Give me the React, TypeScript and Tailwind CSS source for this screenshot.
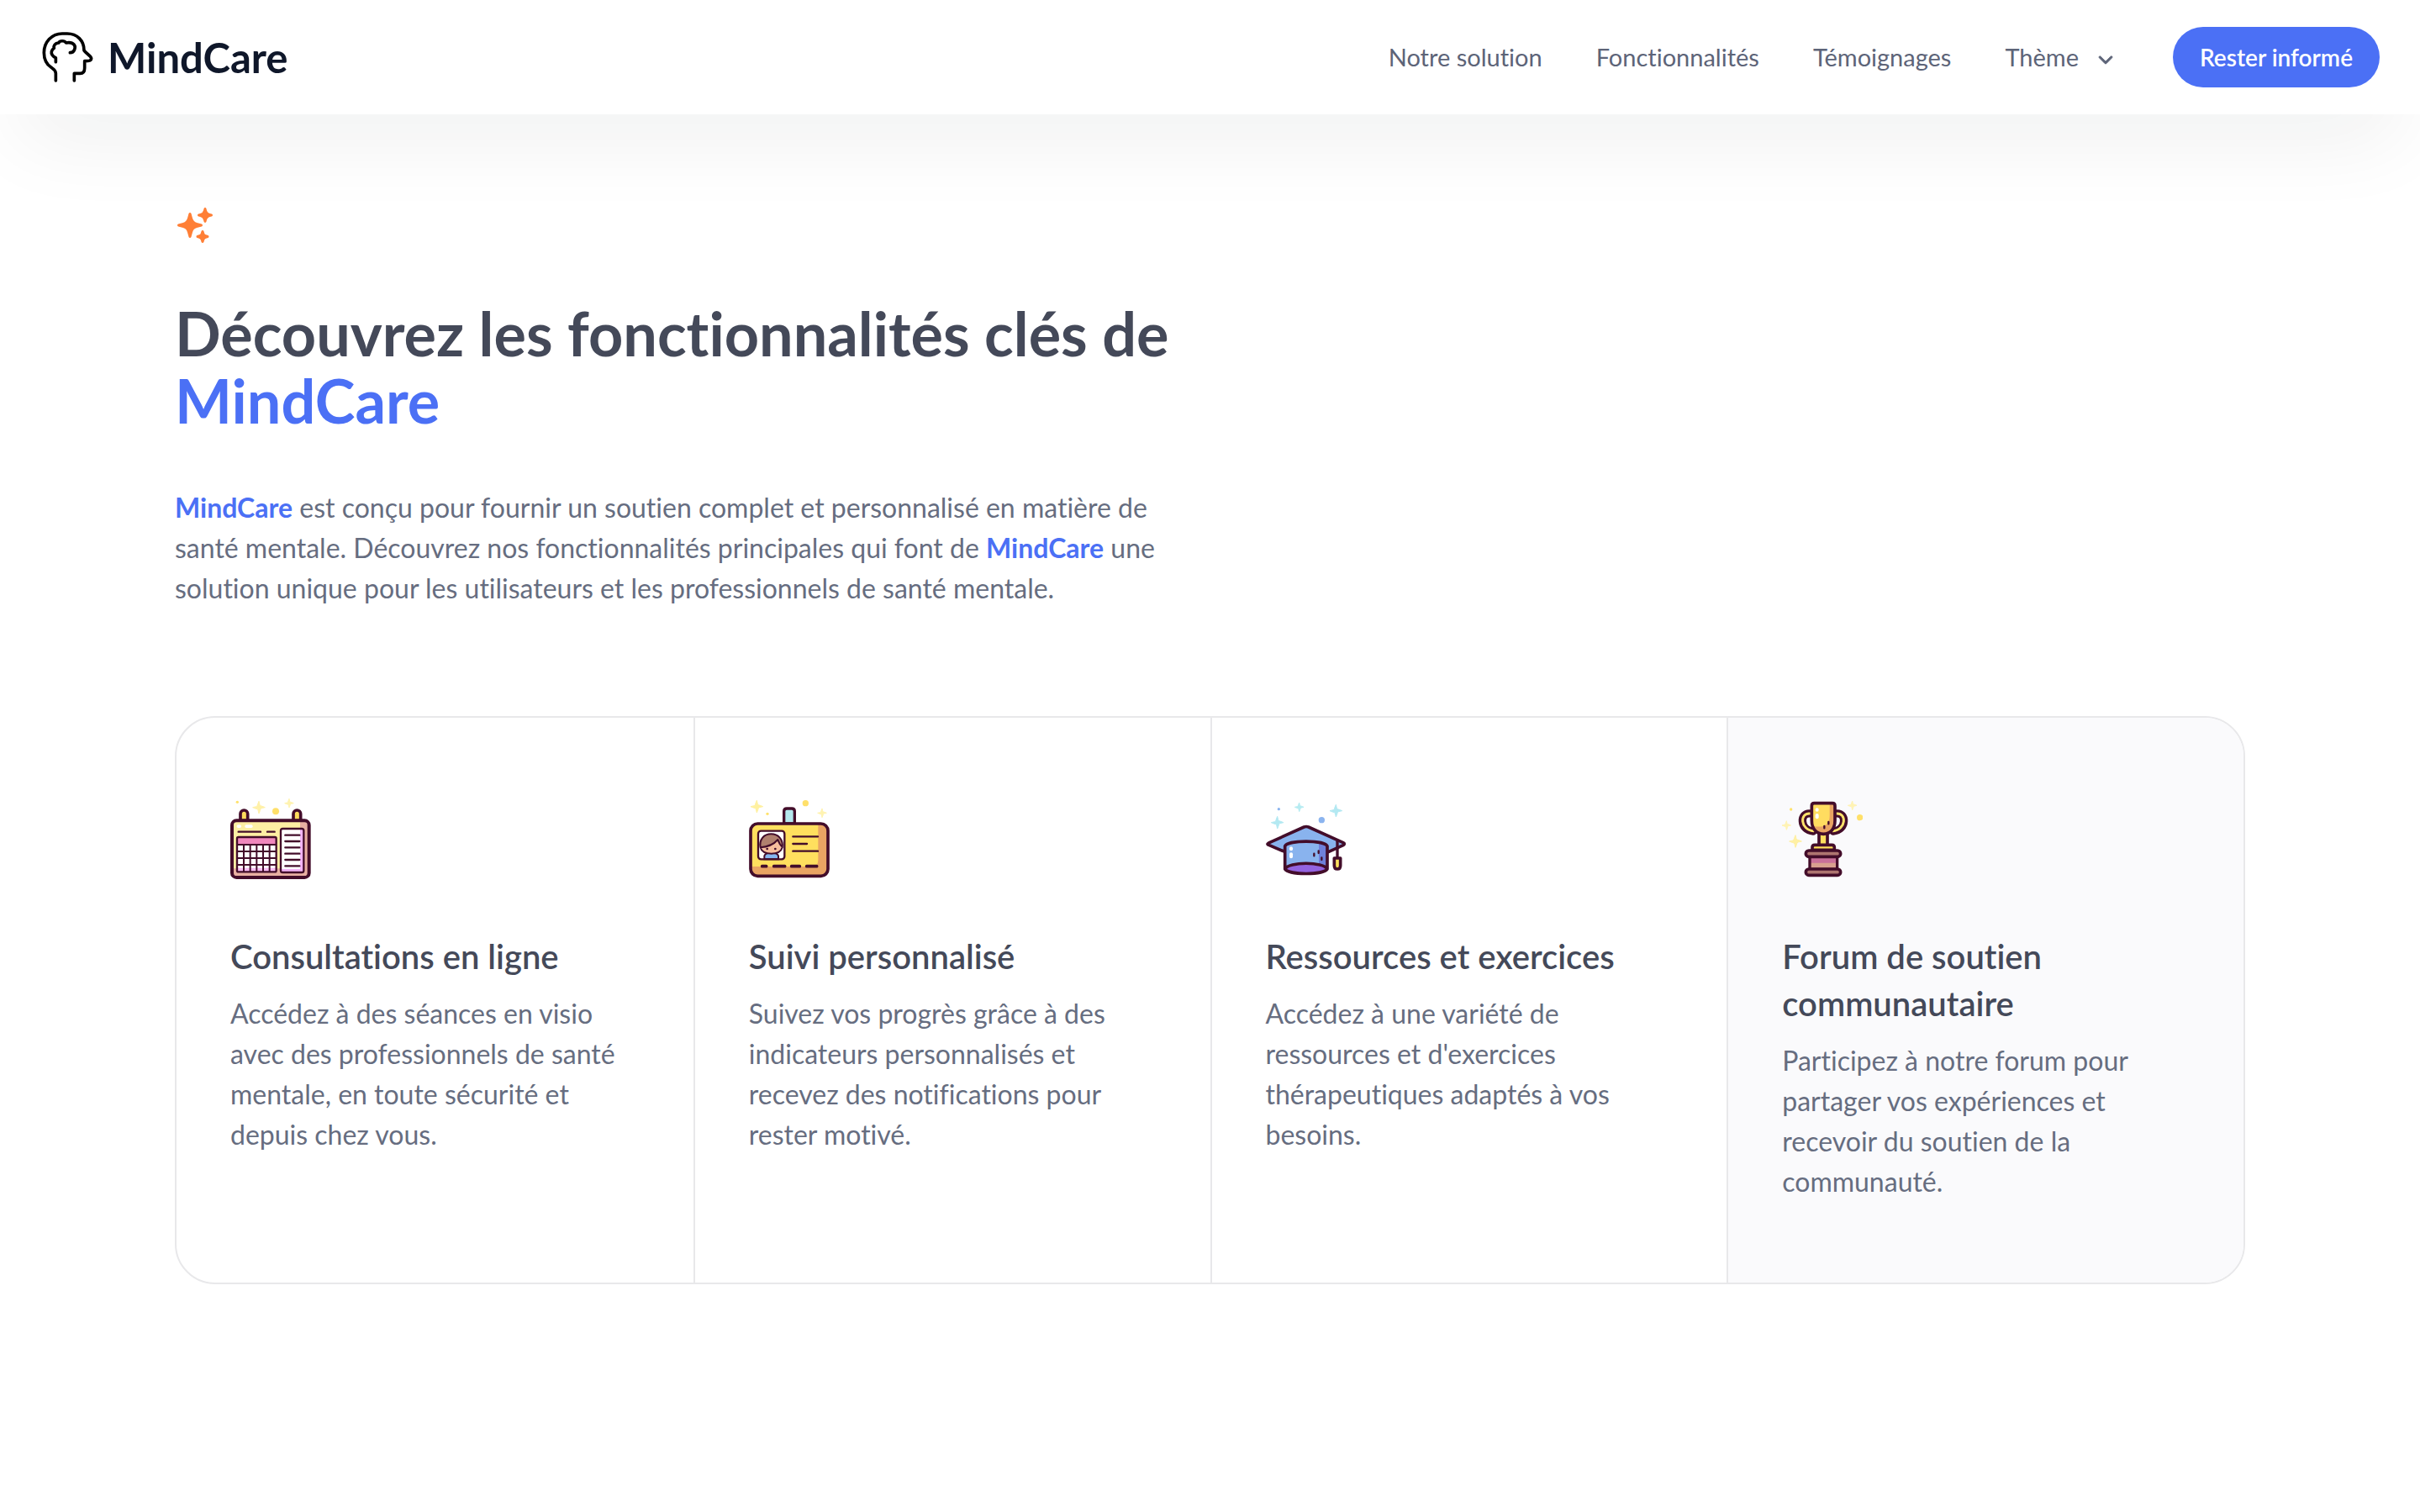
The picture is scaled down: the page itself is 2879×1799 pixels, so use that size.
import type { ReactNode } from "react";
import { HiSparkles } from "react-icons/hi2";

const INK = "#430d2a";

function Star({ x, y, r, fill }: { x: number; y: number; r: number; fill: string }) {
  const k = r * 0.26;
  return (
    <path
      fill={fill}
      stroke={fill}
      strokeWidth={3}
      strokeLinejoin="round"
      d={`M${x} ${y - r}Q${x + k / 2} ${y - k} ${x + k} ${y - k}T${x + r} ${y}Q${x + k} ${y + k / 2} ${x + k} ${y + k}T${x} ${y + r}Q${x - k / 2} ${y + k} ${x - k} ${y + k}T${x - r} ${y}Q${x - k} ${y - k / 2} ${x - k} ${y - k}T${x} ${y - r}Z`}
    />
  );
}

function LogoMark() {
  return (
    <svg
      viewBox="144 108 192 192"
      className="size-16"
      fill="none"
      stroke="#000"
      strokeWidth={11}
      strokeLinecap="round"
      strokeLinejoin="round"
      aria-hidden="true"
    >
      <path d="M199 288V262C199 250 192 247 183 241C167 230 157 212 157 188C157 150 185 120 222 120H240C275 120 300 145 300 180C306 190 326 200 326 209C326 216 318 218 302 218V243C302 256 296 262 286 262H265V288" />
      <path d="M199 221V206C188 202 182 192 184 184C186 178 190 174 193 172C190 163 197 154 209 153C214 144 230 144 236 153C248 151 258 152 264 159C272 168 266 188 250 188" />
    </svg>
  );
}

function CalendarIcon() {
  return (
    <svg viewBox="42 30 288 288" className="size-24" aria-hidden="true">
      <circle cx={67} cy={43} r={5} fill="#ffe26b" />
      <circle cx={204} cy={76} r={12} fill="#ffe06a" />
      <Star x={144} y={62} r={22} fill="#fff1a8" />
      <Star x={252} y={47} r={16} fill="#fff3b0" />
      <path d="M78 110V85a12 12 0 0 1 26 0v25zM267 110V85a12 12 0 0 1 26 0v25z" fill="#ffdb5c" stroke={INK} strokeWidth={11} />
      <rect x={48} y={109} width={275} height={203} rx={16} fill="#fdeea3" />
      <path d="M291 109h16a16 16 0 0 1 16 16v171a16 16 0 0 1-16 16H64a16 16 0 0 1-16-16v-16h243z" fill="#e9b0a2" />
      <rect x={48} y={109} width={275} height={203} rx={16} fill="none" stroke={INK} strokeWidth={12} />
      <rect x={65} y={124} width={16} height={11} rx={5} fill="#fff" />
      <rect x={94} y={124} width={28} height={11} rx={5} fill="#fff" />
      <path d="M71 149h79M174 149h26" stroke={INK} strokeWidth={7} strokeLinecap="round" />
      <rect x={66} y={168} width={140} height={124} rx={5} fill="#fff" />
      <path d="M66 278h140v14H66z" fill="#f9bdf5" />
      <path d="M66 168h140v25H66z" fill="#f088bd" />
      <path
        d="M68 195h136M68 219h136M68 243h136M68 267h136M90 195v96M113 195v96M136 195v96M159 195v96M182 195v96"
        stroke={INK}
        strokeWidth={6}
      />
      <rect x={66} y={168} width={140} height={124} rx={5} fill="none" stroke={INK} strokeWidth={7} />
      <rect x={222} y={138} width={82} height={156} rx={7} fill="#fff" />
      <path d="M291 138h13v156h-82v-12h69z" fill="#f3b5f7" />
      <rect x={222} y={138} width={82} height={156} rx={7} fill="none" stroke={INK} strokeWidth={7} />
      <path
        d="M238 161h51M238 183h51M238 205h51M238 227h51M238 249h51M238 271h51"
        stroke={INK}
        strokeWidth={7}
        strokeLinecap="round"
      />
    </svg>
  );
}

function BadgeIcon() {
  return (
    <svg viewBox="33 30 288 288" className="size-24" aria-hidden="true">
      <Star x={61} y={59} r={22} fill="#fff1a0" />
      <Star x={294} y={82} r={16} fill="#fff3b0" />
      <circle cx={235} cy={47} r={11} fill="#ffe06a" />
      <circle cx={99} cy={85} r={5} fill="#ffe26b" />
      <path d="M158 120V76q0-10 10-10h18q10 0 10 10v44z" fill="#b5e8ee" stroke={INK} strokeWidth={10} />
      <rect x={39} y={120} width={276} height={187} rx={25} fill="#ffdf5e" />
      <path d="M280 120h10a25 25 0 0 1 25 25v137a25 25 0 0 1-25 25H64a25 25 0 0 1-25-25v-9h218q23 0 23-23z" fill="#e9a463" />
      <rect x={39} y={120} width={276} height={187} rx={25} fill="none" stroke={INK} strokeWidth={11} />
      <rect x={66} y={146} width={94} height={101} rx={10} fill="#fff" />
      <path d="M88 247v-12q4-10 16-10h18q12 0 16 10v12z" fill="#86b5ef" stroke={INK} strokeWidth={6} />
      <path d="M76 192a37 36 0 0 1 74 0c0 22-15 35-37 35s-37-13-37-35z" fill="#f7bd9d" />
      <path d="M71 205c-4-30 14-48 40-48s46 17 43 50q-12-12-18-29-22 25-65 27z" fill="#b0806e" />
      <path
        d="M74 205c-5-30 13-48 38-48s44 18 40 48c-4 15-18 22-39 22s-35-7-39-22zM73 205q42-3 63-28 6 18 17 27"
        fill="none"
        stroke={INK}
        strokeWidth={6}
        strokeLinejoin="round"
      />
      <circle cx={98} cy={210} r={4} fill={INK} />
      <circle cx={127} cy={210} r={4} fill={INK} />
      <rect x={66} y={146} width={94} height={101} rx={10} fill="none" stroke={INK} strokeWidth={7} />
      <path d="M190 166h89M190 192h50M190 218h89" stroke={INK} strokeWidth={7} strokeLinecap="round" />
      <path d="M80 272h15M122 272h39M185 272h29M239 272h36" stroke={INK} strokeWidth={11} strokeLinecap="round" />
    </svg>
  );
}

function GraduationIcon() {
  return (
    <svg viewBox="33 30 288 288" className="size-24" strokeLinejoin="round" aria-hidden="true">
      <circle cx={79} cy={68} r={5} fill="#8bb4ef" />
      <circle cx={232} cy={107} r={11} fill="#8bb4ef" />
      <Star x={152} y={61} r={16} fill="#b6ecf2" />
      <Star x={74} y={116} r={22} fill="#b3e9f2" />
      <Star x={283} y={74} r={22} fill="#b3e9f2" />
      <path d="M39 193q2-3 6-5l124-56q8-3 16 0l124 56q8 4 0 9l-53 24H102l-57-24q-5-2-6-4z" fill="#89b3ee" stroke={INK} strokeWidth={11} />
      <path d="M101 200c14-20 137-20 151 0v82c-14 22-137 22-151 0z" fill="#89b3ee" />
      <path d="M222 187q24 4 30 13v82l-30-18z" fill="#6f80da" />
      <path d="M101 282c12-26 139-26 151 0-12 22-139 22-151 0z" fill="#9363e0" />
      <path d="M114 273q62-18 124 0" fill="none" stroke="#ae83ea" strokeWidth={5} />
      <path d="M101 200c14-22 137-22 151 0v82c-14 22-137 22-151 0zM101 282c12-27 139-27 151 0" fill="none" stroke={INK} strokeWidth={11} />
      <rect x={117} y={202} width={12} height={15} rx={6} fill="#fff" />
      <rect x={117} y={223} width={12} height={21} rx={6} fill="#fff" />
      <path d="M205 227v8M221 217v8M232 241v8" stroke={INK} strokeWidth={7} strokeLinecap="round" />
      <path d="M288 184v58" stroke={INK} strokeWidth={10} strokeLinecap="round" />
      <path d="M277 243h22v26q0 13-11 13t-11-13z" fill="#ffe05c" stroke={INK} strokeWidth={11} />
    </svg>
  );
}

function TrophyIcon() {
  return (
    <svg viewBox="33 30 288 288" className="size-24" strokeLinejoin="round" aria-hidden="true">
      <Star x={284} y={55} r={16} fill="#fff3b4" />
      <Star x={49} y={126} r={16} fill="#fff3b4" />
      <Star x={81} y={183} r={22} fill="#fff0a4" />
      <circle cx={65} cy={69} r={5} fill="#ffe26b" />
      <circle cx={311} cy={98} r={11} fill="#ffe06a" />
      <g fill="none" strokeLinecap="round">
        <path d="M136 84c-42-7-40 61 8 63M224 84c42-7 40 61-8 63" stroke={INK} strokeWidth={28} />
        <path d="M134 84c-39-5-37 59 12 62M226 84c39-5 37 59-12 62" stroke="#ffe36b" strokeWidth={9} />
      </g>
      <path d="M165 152h30v46h-30z" fill="#ffdf5e" stroke={INK} strokeWidth={11} />
      <path d="M141 214v-9q0-9 9-9h61q9 0 9 9v9z" fill="#ffe05c" stroke={INK} strokeWidth={11} />
      <path d="M139 56q0-9 9-9h65q9 0 9 9v53c0 32-18 48-41 48s-42-16-42-48z" fill="#ffdc60" />
      <path d="M203 47h10q9 0 9 9v53c0 32-18 48-41 48-20 0-35-11-40-29 36 8 62 0 62-36z" fill="#e9a463" />
      <path d="M139 56q0-9 9-9h65q9 0 9 9v53c0 32-18 48-41 48s-42-16-42-48z" fill="none" stroke={INK} strokeWidth={11} />
      <rect x={152} y={64} width={12} height={13} rx={6} fill="#fff" />
      <rect x={152} y={84} width={12} height={19} rx={6} fill="#fff" />
      <path d="M184 129v7M199 114v7" stroke={INK} strokeWidth={7} strokeLinecap="round" />
      <path d="M132 238h98v45h-98z" fill="#d9a08f" />
      <path d="M132 238h98v22h-98z" fill="#c9709a" />
      <path d="M132 238h98v45h-98z" fill="none" stroke={INK} strokeWidth={10} />
      <rect x={118} y={216} width={124} height={22} rx={11} fill="#ae7570" stroke={INK} strokeWidth={11} />
      <rect x={118} y={282} width={124} height={22} rx={11} fill="#ae7570" stroke={INK} strokeWidth={11} />
    </svg>
  );
}

function Brand() {
  return <span className="font-bold text-[#4b70f5]">MindCare</span>;
}

const links = [
  { label: "Notre solution", href: "#solution" },
  { label: "Fonctionnalités", href: "#fonctionnalites" },
  { label: "Témoignages", href: "#temoignages" },
];

const features: { title: string; text: string; icon: ReactNode }[] = [
  {
    title: "Consultations en ligne",
    text: "Accédez à des séances en visio avec des professionnels de santé mentale, en toute sécurité et depuis chez vous.",
    icon: <CalendarIcon />,
  },
  {
    title: "Suivi personnalisé",
    text: "Suivez vos progrès grâce à des indicateurs personnalisés et recevez des notifications pour rester motivé.",
    icon: <BadgeIcon />,
  },
  {
    title: "Ressources et exercices",
    text: "Accédez à une variété de ressources et d'exercices thérapeutiques adaptés à vos besoins.",
    icon: <GraduationIcon />,
  },
  {
    title: "Forum de soutien communautaire",
    text: "Participez à notre forum pour partager vos expériences et recevoir du soutien de la communauté.",
    icon: <TrophyIcon />,
  },
];

export default function App() {
  return (
    <div className="min-h-screen bg-white font-['Lato',sans-serif] text-[#5d6478] [font-variant-ligatures:none]">
      <header className="flex items-center justify-between bg-white px-12 py-8 shadow-[0_50px_100px_-24px_rgba(20,28,25,0.07)]">
        <a href="#accueil" className="flex items-center gap-4">
          <LogoMark />
          <span className="text-[49px] leading-16 font-bold text-[#0f172a]">MindCare</span>
        </a>
        <nav className="flex items-center gap-16 text-[29px] leading-10">
          {links.map((link) => (
            <a key={link.href} href={link.href}>
              {link.label}
            </a>
          ))}
          <button type="button" className="flex items-center gap-4">
            Thème
            <svg viewBox="0 0 20 20" className="mt-1 size-8" fill="currentColor" aria-hidden="true">
              <path
                fillRule="evenodd"
                stroke="currentColor"
                strokeWidth={0.5}
                d="M5.22 8.22a.75.75 0 0 1 1.06 0L10 11.94l3.72-3.72a.75.75 0 1 1 1.06 1.06l-4.25 4.25a.75.75 0 0 1-1.06 0L5.22 9.28a.75.75 0 0 1 0-1.06Z"
              />
            </svg>
          </button>
          <button
            type="button"
            className="rounded-full bg-[#4b70f5] px-8 py-4 text-[28px] leading-10 font-semibold text-white"
          >
            Rester informé
          </button>
        </nav>
      </header>

      <main className="px-[208px] pt-[108px] pb-32">
        <HiSparkles className="size-12 text-[#ff7f36]" aria-hidden="true" />
        <h1 className="mt-16 max-w-[1216px] text-[72px] leading-[80px] font-bold text-[#444959]">
          Découvrez les fonctionnalités clés de <span className="text-[#4b70f5]">MindCare</span>
        </h1>
        <p className="mt-16 max-w-[1200px] text-[32px] leading-[48px] text-[#666d80]">
          <Brand /> est conçu pour fournir un soutien complet et personnalisé en matière de santé mentale. Découvrez
          nos fonctionnalités principales qui font de <Brand /> une solution unique pour les utilisateurs et les
          professionnels de santé mentale.
        </p>

        <section className="mt-32 grid grid-cols-4 overflow-hidden rounded-[48px] border-2 border-[#e8e8ea]">
          {features.map((feature) => (
            <article
              key={feature.title}
              className="border-l-2 border-[#e8e8ea] px-16 py-24 first:border-l-0 last:bg-[#fafafc]"
            >
              {feature.icon}
              <h2 className="mt-16 text-[40px] leading-[56px] font-semibold text-[#444959]">{feature.title}</h2>
              <p className="mt-4 text-[32px] leading-[48px] text-[#666d80]">{feature.text}</p>
            </article>
          ))}
        </section>
      </main>
    </div>
  );
}
